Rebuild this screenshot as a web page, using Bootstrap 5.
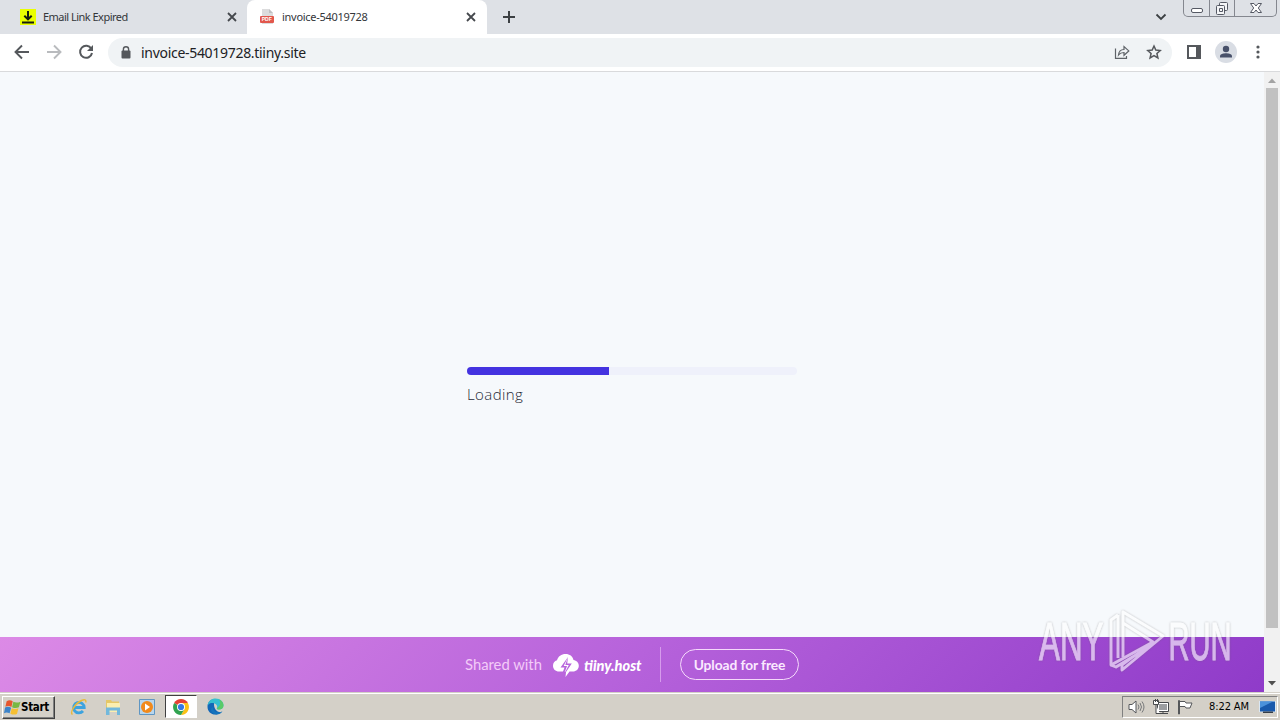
<!DOCTYPE html>
<html lang="en">
<head>
  <meta charset="UTF-8" />
  <meta name="viewport" content="width=device-width, initial-scale=1.0"/>
  <title>invoice-54019728</title>
  <link href="https://cdn.jsdelivr.net/npm/bootstrap@5.3.0/dist/css/bootstrap.min.css" rel="stylesheet"/>
  <style>
    body {
      width: 1280px;
      height: 720px;
      font-family: "DejaVu Sans Condensed", "DejaVu Sans", sans-serif;
      font-stretch: condensed;
      color: #202124;
    }
    svg { display: block; flex: none; }

    /* Tab strip */
    .tab-strip { height: 34px; background: #dee1e6; }
    .browser-tab { height: 34px; font-size: 11px; line-height: 34px; }
    .tab-first { width: 247px; padding-left: 20px; }
    .tab-current { width: 240px; padding-left: 12px; background: #fff; border-radius: 8px 8px 0 0; }
    .tab-title { margin-left: 7px; font-family: "Noto Sans", sans-serif; font-stretch: normal; color: #34363a; }
    .tab-first .tab-title { letter-spacing: -.52px; }
    .tab-current .tab-title { letter-spacing: -.28px; }
    .tab-close { margin-right: 11px; }
    .tab-first .tab-close { margin-right: 10px; }
    .new-tab { margin-left: 16px; }
    .tab-search { margin-right: 16px; }
    .window-buttons {
      width: 94px;
      height: 17px;
      margin-right: 3px;
      border: 1px solid #84878f;
      border-top: 0;
      border-radius: 0 0 5px 5px;
    }
    .window-buttons > div { width: 25px; }
    .window-buttons > div + div { border-left: 1px solid #84878f; }

    /* Toolbar */
    .toolbar { height: 38px; padding: 0 6px; background: #fff; border-bottom: 1px solid #d9dadc; }
    .tool { width: 32px; height: 29px; display: flex; align-items: center; justify-content: center; }
    .toolbar .tool svg { margin-bottom: 1px; }
    .omnibox { height: 29px; margin: 0 6px; padding: 0 2px; border-radius: 15px; background: #f0f3f5; }
    .address {
      margin-left: -1px;
      font: 14px/29px "Noto Sans", sans-serif;
      letter-spacing: -.3px;
    }

    /* Page */
    .viewport { height: 620px; background: #f6f9fc; }
    .page-body { height: 565px; padding: 295px 0 0 467px; }
    .load-track { width: 330px; height: 8px; border-radius: 4px; background: #eff1fb; }
    .load-track .progress-bar { background: #4433e0; }
    .load-label { margin-top: 7px; font: 300 15px/25px "Open Sans", "Noto Sans", sans-serif; color: #1f2937; letter-spacing: .4px; }
    .share-banner {
      height: 55px;
      padding-left: 465px;
      background: linear-gradient(135deg, #dc8ae6 0%, #b662db 50%, #8f3bc9 100%);
      font-family: Lato, sans-serif;
      font-stretch: normal;
      color: #fff;
    }
    .shared { width: 88px; font-size: 14.8px; color: #f3cbf8; }
    .brand-name { width: 58px; margin-left: 5px; padding-top: 3px; font-size: 14.6px; font-weight: 900; font-style: italic; }
    .divider { width: 1px; height: 35px; margin: 0 20px 0 18px; background: #d69bec; }
    .upload-btn {
      width: 119px;
      height: 31px;
      margin-left: -1px;
      padding: 0;
      border: 1.4px solid #f5d9fb;
      border-radius: 16px;
      font-size: 13.8px;
      font-weight: 700;
      line-height: 28px;
      letter-spacing: -.08px;
      color: #fbe9ff;
    }
    .scroll-gutter { width: 16px; background: #f1f1f1; }
    .scroll-thumb { width: 12px; height: 540px; background: #c1c1c1; }
    .watermark { position: absolute; left: 1030px; top: 605px; }

    /* Taskbar */
    .taskbar { height: 28px; padding: 2px 2px 0 1px; background: #d4d0c8; border-top: 1px solid #d4d0c8; box-shadow: inset 0 1px #fff; }
    .start-btn {
      width: 53px;
      height: 23px;
      margin: 1px 0 0 1px;
      padding-left: 1px;
      border: 1px solid;
      border-color: #fff #404040 #404040 #fff;
      box-shadow: inset -1px -1px #808080;
      font-size: 11.5px;
      font-weight: 700;
      letter-spacing: -.3px;
      color: #000;
    }
    .quick-launch { margin-left: 7px; }
    .quick-item { width: 34px; height: 23px; display: flex; align-items: center; justify-content: center; }
    .quick-item.pressed { width: 32px; margin: 0 1px; background: #fff; border: 1px solid; border-color: #404040 #fff #fff #404040; }
    .tray {
      width: 156px;
      height: 22px;
      margin-top: 1px;
      padding-left: 5px;
      border: 1px solid;
      border-color: #808080 #fff #fff #808080;
      color: #000;
    }
    .clock { margin-left: 16px; width: 50px; font-size: 11px; letter-spacing: -.1px; white-space: nowrap; }
  </style>
</head>
<body class="overflow-hidden">
  <!-- Tabs -->
  <div class="tab-strip d-flex">
    <div class="browser-tab tab-first d-flex align-items-center">
      <svg width="16" height="16" viewBox="0 0 16 16">
        <path fill="#eaff00" d="M0 0h16v16H0z"/>
        <path fill="none" stroke="#161d10" stroke-width="2" d="M8 2v8M4.300 6.800 8 10.300l3.700-3.500M2 13.500h12"/>
      </svg>
      <span class="tab-title">Email Link Expired</span>
      <svg class="tab-close ms-auto" width="10" height="10" viewBox="0 0 10 10"><path stroke="#45484d" stroke-width="1.800" d="m1 1 8 8M9 1 1 9"/></svg>
    </div>
    <div class="browser-tab tab-current d-flex align-items-center">
      <svg width="16" height="16" viewBox="0 0 16 16">
        <path fill="#dcdcdd" d="M3 0h7l4 4v11H3z"/>
        <path fill="#bfc0c2" d="M10 0v4h4z"/>
        <rect y="7" x="1" width="14" height="7" rx="1" fill="#e2574c"/>
        <text x="2.700" y="12.300" font-family="Liberation Sans" font-size="5" font-weight="700" fill="#fff">PDF</text>
      </svg>
      <span class="tab-title">invoice-54019728</span>
      <svg class="tab-close ms-auto" width="10" height="10" viewBox="0 0 10 10"><path stroke="#45484d" stroke-width="1.800" d="m1 1 8 8M9 1 1 9"/></svg>
    </div>
    <svg class="new-tab align-self-center" width="12" height="12" viewBox="0 0 12 12"><path stroke="#3c4043" stroke-width="2" d="M6 0v12M0 6h12"/></svg>
    <svg class="tab-search ms-auto align-self-center" width="12" height="8" viewBox="0 0 12 8"><path fill="none" stroke="#3c4043" stroke-width="1.800" d="M1.500 1.500 6 6l4.500-4.500"/></svg>
    <div class="window-buttons d-flex">
      <div class="d-flex justify-content-center">
        <svg width="14" height="16" viewBox="0 0 14 16"><rect x="1.500" y="8.500" width="11" height="4" rx="1.500" fill="#fff" stroke="#555964"/></svg>
      </div>
      <div class="d-flex justify-content-center">
        <svg width="14" height="16" viewBox="0 0 14 16"><g fill="#f4f5f7" stroke="#555964"><rect x="4.500" y="2.500" width="8" height="8" rx="1"/><rect x="1.500" y="5.500" width="8" height="9" rx="1"/><path d="M4.500 8.500h3v3h-3z"/></g></svg>
      </div>
      <div class="d-flex justify-content-center flex-fill">
        <svg width="14" height="16" viewBox="0 0 14 16"><path fill="#fff" stroke="#555964" d="M1.500 3.500h3.500l2 2.500 2-2.500h3.500L9.300 8l3.200 4.500H9L7 10l-2 2.500H1.500L4.700 8z"/></svg>
      </div>
    </div>
  </div>

  <!-- Address bar -->
  <div class="toolbar d-flex align-items-center">
    <div class="tool"><svg width="16" height="16" viewBox="0 0 16 16"><path fill="none" stroke="#55585c" stroke-width="1.900" d="M15 8H2M8 1.500 1.500 8 8 14.500"/></svg></div>
    <div class="tool"><svg width="16" height="16" viewBox="0 0 16 16"><path fill="none" stroke="#b9bbbe" stroke-width="1.900" d="M1 8h13M8 1.500 14.500 8 8 14.500"/></svg></div>
    <div class="tool"><svg width="16" height="16" viewBox="0 0 16 16"><path fill="none" stroke="#55585c" stroke-width="2" d="M13.300 4.800A6 6 0 1 0 14 9"/><path fill="#55585c" d="M15 1v6H9z"/></svg></div>
    <div class="omnibox d-flex align-items-center flex-fill">
      <div class="tool"><svg width="10" height="13" viewBox="0 0 10 13"><rect x=".5" y="4.500" width="9" height="8" rx="1" fill="#55585c"/><path fill="none" stroke="#55585c" stroke-width="1.400" d="M2.400 5V3.300a2.600 2.500 0 0 1 5.200 0V5"/></svg></div>
      <span class="address">invoice-54019728.tiiny.site</span>
      <div class="tool ms-auto"><svg width="16" height="16" viewBox="0 0 16 16"><path fill="none" stroke="#5f6368" stroke-width="1.200" d="M1.500 4.500v9.900h11v-2.500M4.500 11c.3-3.600 2.300-5.500 5.500-5.500v-3l4.800 4.400-4.800 4.400V8.500C7.500 8.500 5.800 9.300 4.500 11z"/></svg></div>
      <div class="tool"><svg width="16" height="16" viewBox="0 0 16 16"><path fill="none" stroke="#55585c" stroke-width="1.500" d="m8 2 1.800 4.100 4.400.4-3.300 3 1 4.400L8 11.600l-3.900 2.300 1-4.400-3.300-3 4.400-.4z"/></svg></div>
    </div>
    <div class="tool"><svg width="14" height="14" viewBox="0 0 14 14"><path fill="none" stroke="#55585c" stroke-width="2" d="M1 1h12v12H1z"/><path fill="#55585c" d="M9 1h4v12H9z"/></svg></div>
    <div class="tool"><svg width="22" height="22" viewBox="0 0 22 22"><circle cx="11" cy="11" r="11" fill="#d9dde4"/><g fill="#475069"><circle cx="11" cy="8" r="3.200"/><path d="M5 16.500v-1.300C5 13 8.500 12.200 11 12.200s6 .8 6 3v1.300z"/></g></svg></div>
    <div class="tool"><svg width="4" height="14" viewBox="0 0 4 14"><g fill="#55585c"><circle cx="2" cy="2" r="1.600"/><circle cx="2" cy="7" r="1.600"/><circle cx="2" cy="12" r="1.600"/></g></svg></div>
  </div>

  <!-- Page content -->
  <div class="viewport d-flex">
    <div class="flex-fill">
      <div class="page-body">
        <div class="progress load-track">
          <div class="progress-bar" style="width:43%"></div>
        </div>
        <div class="load-label">Loading</div>
      </div>
      <div class="share-banner d-flex align-items-center">
        <span class="shared">Shared with</span>
        <svg width="26" height="24" viewBox="0 0 26 24">
          <path fill="#fff" d="M6 18.500C2.500 18.500 0 16 0 12.700c0-2.700 1.500-4.700 4-5.400C5 3.300 8.500 1 12.500 1c4.300 0 7.200 2.300 8 6 3 .4 5.300 2.700 5.300 5.700 0 3.400-2.500 5.800-6 5.800h-3.300L12.500 24l.6-5.500z"/>
          <path fill="#b765dd" d="M15 4 7.500 14.500h4L9.500 20l2.500-1.500 2-5.500h-3.300z"/>
          <path fill="#b765dd" d="m15 4-.8 6.500h4.600L13 19l-.4-.8 3.200-6.200h-3.500z"/>
        </svg>
        <span class="brand-name">tiiny.host</span>
        <div class="divider"></div>
        <button class="btn upload-btn">Upload for free</button>
      </div>
    </div>
    <div class="scroll-gutter d-flex flex-column align-items-center">
      <svg width="16" height="16" viewBox="0 0 16 16"><path fill="#a3a3a3" d="m4 11 4-4.500 4 4.500z"/></svg>
      <div class="scroll-thumb"></div>
      <svg class="mt-auto" width="16" height="17" viewBox="0 0 16 17"><path fill="#505050" d="m4 6 4 4.500L12 6z"/></svg>
    </div>
  </div>

  <!-- Taskbar -->
  <div class="taskbar d-flex">
    <div class="start-btn d-flex align-items-center">
      <svg width="17" height="17" viewBox="0 0 16 16">
        <path fill="#e6562d" d="M2.500 2c2-1.200 4-1 5.700.2L7 7.500c-1.700-1-3.700-1.200-5.700-.2z"/>
        <path fill="#78b843" d="M8.800 2.700c2 .8 4.200.9 6.700-.2l-1.500 5.300c-2 1-4.200.9-6.400-.1z"/>
        <path fill="#3c83c9" d="M1 8c2-1.100 4-.8 5.700.2l-1.400 5.300c-1.600-1-3.500-1.200-5.300-.2z"/>
        <path fill="#f6bf31" d="M7.300 8.600c2 1 4.200 1 6.300.1l-1.400 5.300c-2 1-4.200.8-6.200-.2z"/>
      </svg>
      <span>Start</span>
    </div>
    <div class="quick-launch d-flex">
      <div class="quick-item"><svg width="18" height="18" viewBox="0 0 18 18"><path fill="none" stroke="#3ca3df" stroke-width="2.800" d="M4 9.500h10.200A5.300 5.300 0 1 0 13 13"/><path fill="none" stroke="#e8b93c" stroke-width="1.400" d="M2.500 16.500C-.5 14.500 5 5.500 11.500 2.500c3-1.400 5-.8 4.200 2"/></svg></div>
      <div class="quick-item"><svg width="18" height="18" viewBox="0 0 18 18"><path fill="#e5c767" d="M2 2h5l1 1.500h7V14H2z"/><path fill="#fbeeb0" d="M3 5h13v9H3z"/><path fill="#72b8dc" d="M2 9.500h14V17h-3v-4.500H5.500V17H2z"/></svg></div>
      <div class="quick-item"><svg width="18" height="18" viewBox="0 0 18 18"><path fill="#b8d6ed" stroke="#5f96c3" d="M1.500 1.500h15v15h-15z"/><circle cx="9" cy="9" r="6" fill="#f18a1c"/><path fill="#fff" d="m7 5.500 5 3.500-5 3.500z"/></svg></div>
      <div class="quick-item pressed"><svg width="16" height="16" viewBox="0 0 16 16"><path fill="#e44134" d="M8 8 1.100 4A8 8 0 0 1 14.900 4z"/><path fill="#fbc116" d="M8 8V4h6.900A8 8 0 0 1 8 16l3.500-6z"/><path fill="#31a350" d="M8 8l3.500 2L8 16A8 8 0 0 1 1.100 4z"/><circle cx="8" cy="8" r="4" fill="#fff"/><circle cx="8" cy="8" r="3.100" fill="#3478e5"/></svg></div>
      <div class="quick-item"><svg width="17" height="17" viewBox="0 0 17 17"><path fill="#1267b7" d="M.5 9C.5 3.500 4 1 8.500 1 6 5 6 13 13.800 14.500 8 19 .5 15.500.5 9z"/><path fill="#35bfd0" d="M.6 7.500C1.300 3 4.500.5 8.500.5c5 0 8 3.500 8 6.700 0 3-2.300 4.500-5 4.300-2-.1-2.200-1-1.500-2C11 7.300 8 4.500 4.500 5 2.500 5.300 1.200 6.300.6 7.500z"/><path fill="#5acb67" d="M12 1.500c3 1.200 4.500 3.700 4.500 5.900 0 2.600-2 4.100-4.500 4.100-1.500 0-2.200-.5-2-1.300C13.500 8 14 4.500 12 1.500z"/><path fill="#1574bc" d="M6 9c-.5 4.500 4.500 7 9.500 4.200C13 17.500 6.500 17.500 4.500 13.500 3.500 11.500 4.200 9.800 6 9z"/></svg></div>
    </div>
    <div class="tray d-flex align-items-center ms-auto">
      <svg width="17" height="16" viewBox="0 0 17 16"><path fill="#fff" stroke="#55575a" d="M1 5.500h3L8 2v12l-4-3.500H1z"/><path fill="none" stroke="#77797b" d="M10 5.500q2 2.500 0 5M12 4q3 4 0 8M14 2.500q4 5.500 0 11"/></svg>
      <svg class="ms-2" width="16" height="16" viewBox="0 0 16 16"><path fill="#fff" stroke="#47494c" d="M4.500 3.500h11v9h-11z"/><path fill="#9b9da0" d="M6 5h8v6H6z"/><path stroke="#47494c" d="M10 13v2M6 14.500h9"/><path fill="#fff" stroke="#47494c" d="M.5 1.500h5v4h-5zM2.500 0v3M4.500 0v3M3 6v8.500h4"/></svg>
      <svg class="ms-2" width="16" height="16" viewBox="0 0 16 16"><path fill="#fff" stroke="#55575a" d="M1.500 15V1.500h1V15zM2.500 2.500H8l1 1.500h6l-2 5H9l-1-1.500H2.500z"/></svg>
      <span class="clock">8:22 AM</span>
      <svg width="17" height="16" viewBox="0 0 17 16"><path fill="#d9e7f4" d="M0 2h17v11H0z"/><path fill="#1959ac" d="M1 2.500h15v10H1z"/><path fill="#4b91db" d="M1 2.500h13L1 9z"/><path fill="#343d48" d="M4 12.500h10V14H4z"/></svg>
    </div>
  </div>

  <!-- Sandbox watermark -->
  <svg class="watermark" width="230" height="75" viewBox="0 0 230 75">
    <defs><filter id="soft"><feDropShadow dx="0" dy="0" stdDeviation="1.200" flood-color="#666" flood-opacity=".7"/></filter></defs>
    <g filter="url(#soft)" opacity=".62">
      <g font-family="Liberation Sans" font-size="54" fill="#fff" stroke="#fff" stroke-width=".9">
        <text transform="translate(9 55) scale(.58 1)">ANY</text>
        <text transform="translate(138.500 55) scale(.54 1)">RUN</text>
      </g>
      <g fill="none" stroke="#fff" stroke-width="2.800" stroke-linejoin="round">
        <path d="M88 10 81 15V60l42-23M88 10v43"/>
        <path d="M93 52V7l40 24-41 34v-5l31-23-30-19M81 60l5 2 33-20"/>
      </g>
    </g>
  </svg>

  <script src="https://cdn.jsdelivr.net/npm/bootstrap@5.3.0/dist/js/bootstrap.bundle.min.js"></script>
</body>
</html>
